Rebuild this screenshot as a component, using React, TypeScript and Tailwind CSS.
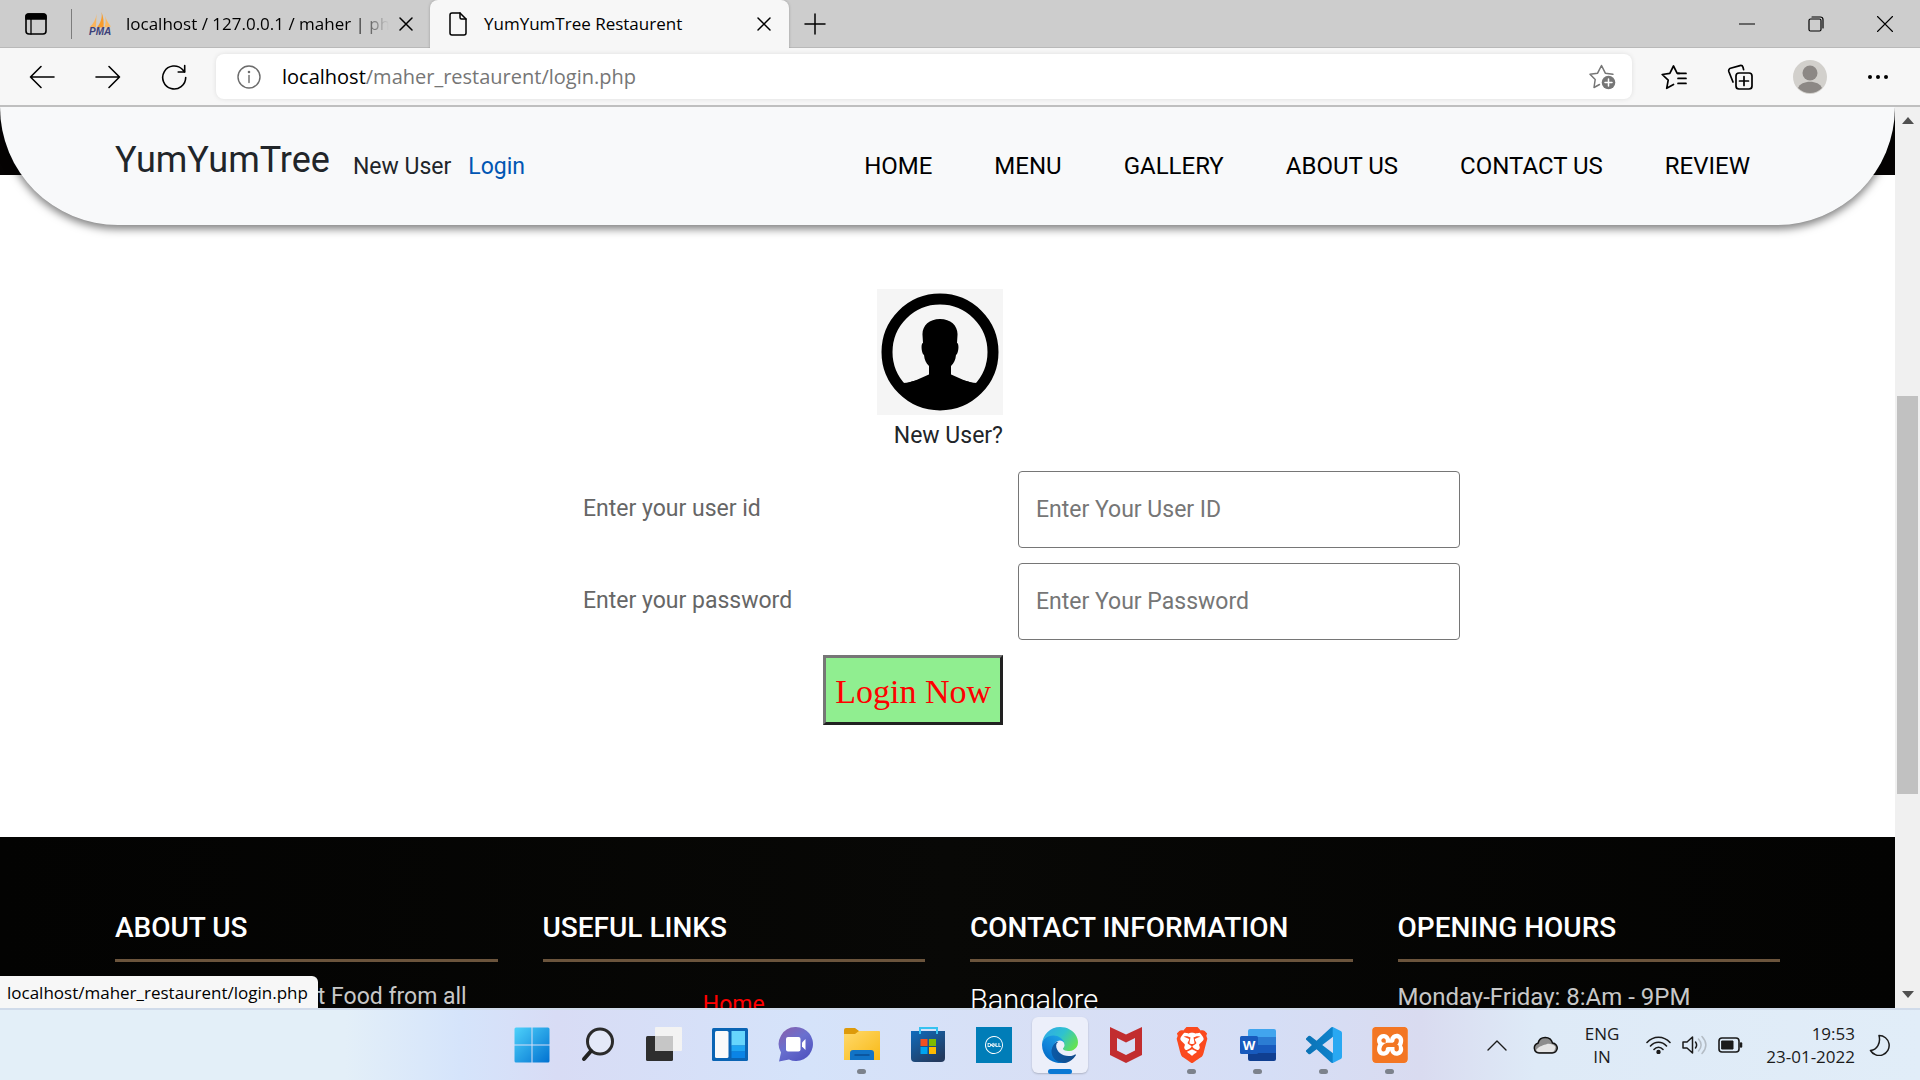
import React from "react";
import { SiBrave, SiDell, SiXampp } from "react-icons/si";

const stroke = {
  fill: "none",
  stroke: "currentColor",
  strokeLinecap: "round" as const,
  strokeLinejoin: "round" as const,
};

function CloseGlyph() {
  return (
    <svg viewBox="0 0 14 14" className="size-[14px]" {...stroke} strokeWidth="1.5">
      <path d="M1 1l12 12M13 1L1 13" />
    </svg>
  );
}

function PmaIcon() {
  return (
    <svg viewBox="0 0 24 24" className="h-6 w-[26px]">
      <path d="M8.500 2C8 7 5.500 12 1.500 15.500L8 15z" fill="#f9b45c" />
      <path d="M13.500 0C14.500 6 12.500 11 9 15.500h6.500C16 10 15.500 5 13.500 0z" fill="#f89c2c" />
      <path d="M17 4c1 4 .8 8-.5 11.500L23 14.500C20.500 12 18.500 8 17 4z" fill="#fbb860" />
      <text x="1" y="23" fontFamily="Liberation Sans" fontSize="10" fontWeight="700" fontStyle="italic" fill="#3c3f78">
        PMA
      </text>
    </svg>
  );
}

function TabBar() {
  return (
    <div className="flex h-12 shrink-0 items-center border-b border-[#b9b9b9] bg-[#cdcdcd] font-['Open_Sans',sans-serif] text-[17px] text-black">
      <button aria-label="Tab actions" className="ml-6">
        <svg viewBox="0 0 24 24" className="size-6" {...stroke} strokeWidth="1.600">
          <rect x="2" y="2" width="20" height="20" rx="3" />
          <path d="M2 4.500Q2 2 4.500 2h15Q22 2 22 4.500V7H2z" fill="currentColor" />
          <path d="M7 7v15" strokeWidth="1.300" />
        </svg>
      </button>
      <div className="ml-[23px] h-[30px] w-px bg-[#7c7c7c]" />
      <div className="flex w-[358px] items-center pl-[15px] pr-[17px]">
        <PmaIcon />
        <span className="ml-[13px] min-w-0 flex-1 overflow-hidden whitespace-nowrap [mask-image:linear-gradient(to_right,black_86%,transparent)]">
          localhost / 127.0.0.1 / maher | phpMyAdmin
        </span>
        <button aria-label="Close tab" className="ml-2.5">
          <CloseGlyph />
        </button>
      </div>
      <div className="flex h-12 w-[359px] items-center rounded-t-lg bg-[#f7f7f7] pl-[19px] pr-[18px] shadow-[0_0_3px_rgba(0,0,0,0.25)]">
        <svg viewBox="0 0 18 24" className="h-6 w-[18px]" {...stroke} strokeWidth="1.500">
          <path d="M3 1h8l6 6v14a2 2 0 0 1-2 2H3a2 2 0 0 1-2-2V3a2 2 0 0 1 2-2z" />
          <path d="M11 1v4.500A1.500 1.500 0 0 0 12.500 7H17" />
        </svg>
        <span className="ml-[17px] flex-1 whitespace-nowrap">YumYumTree Restaurent</span>
        <button aria-label="Close tab">
          <CloseGlyph />
        </button>
      </div>
      <button aria-label="New tab" className="ml-[15px]">
        <svg viewBox="0 0 22 22" className="size-[22px]" {...stroke} strokeWidth="1.500">
          <path d="M11 1v20M1 11h20" />
        </svg>
      </button>
      <div className="ml-auto mr-[27px] flex items-center gap-[53px]">
        <button aria-label="Minimize">
          <svg viewBox="0 0 16 16" className="size-4" {...stroke} strokeWidth="1.200">
            <path d="M.5 8h15" />
          </svg>
        </button>
        <button aria-label="Restore">
          <svg viewBox="0 0 16 16" className="size-4" {...stroke} strokeWidth="1.200">
            <rect x="1" y="3" width="12" height="12" rx="1.500" />
            <path d="M4 1h8.500A2.500 2.500 0 0 1 15 3.500V12" />
          </svg>
        </button>
        <button aria-label="Close window">
          <svg viewBox="0 0 16 16" className="size-4" {...stroke} strokeWidth="1.100">
            <path d="M.5.5l15 15M15.500.5l-15 15" />
          </svg>
        </button>
      </div>
    </div>
  );
}

function ToolBar() {
  return (
    <div className="flex h-[59px] shrink-0 items-center border-b-2 border-[#bfbfbf] bg-[#f7f7f7] pl-[29px] pr-[31px] font-['Open_Sans',sans-serif] text-xl text-black">
      <div className="flex items-center gap-10">
        <button aria-label="Back">
          <svg viewBox="0 0 26 26" className="size-[26px]" {...stroke} strokeWidth="1.600">
            <path d="M25 13H1.500M12 2.500L1.500 13 12 23.500" />
          </svg>
        </button>
        <button aria-label="Forward">
          <svg viewBox="0 0 26 26" className="size-[26px]" {...stroke} strokeWidth="1.600">
            <path d="M1 13h23.500M14 2.500L24.500 13 14 23.500" />
          </svg>
        </button>
        <button aria-label="Refresh">
          <svg viewBox="0 0 26 26" className="size-[26px]" {...stroke} strokeWidth="1.600">
            <path d="M24.700 13.500A11.500 11.500 0 1 1 21.500 5.500L23.500 8" />
            <path d="M23.700 1.500V8h-6.500" />
          </svg>
        </button>
      </div>
      <div className="ml-[29px] flex h-[45px] flex-1 items-center rounded-lg bg-white pl-[21px] pr-4 shadow-[0_0_5px_rgba(0,0,0,0.1)]">
        <svg viewBox="0 0 24 24" className="size-6 text-[#6b6b6b]" {...stroke} strokeWidth="1.400">
          <circle cx="12" cy="12" r="11" />
          <path d="M12 10.500v7" />
          <circle cx="12" cy="7" r=".6" fill="currentColor" />
        </svg>
        <span className="ml-[21px] flex-1 whitespace-nowrap text-[#767676]">
          <span className="text-black">localhost</span>/maher_restaurent/login.php
        </span>
        <button aria-label="Add to favorites" className="text-[#767676]">
          <svg viewBox="0 0 27 27" className="size-[27px]" {...stroke} strokeWidth="1.500">
            <path d="M10.500 21.500L5 24.500 6.200 16.500 1 11.300l7.600-1.100L12.500 2.500l3.800 7.700 7.600 1.100" />
            <circle cx="19.500" cy="19.500" r="6.800" fill="currentColor" stroke="none" />
            <path d="M19.500 16v7M16 19.500h7" stroke="#fff" />
          </svg>
        </button>
      </div>
      <div className="ml-[29px] flex items-center gap-10">
        <button aria-label="Favorites">
          <svg viewBox="0 0 26 26" className="size-[26px]" {...stroke} strokeWidth="1.700">
            <path d="M12.500 20.500l-6.800 3.800 1.500-8.200L1.200 10.500l7.600-1.100L12.500 2l3.700 7.400h2" />
            <path d="M17 9.400h8M17 14.400h8M17 19.400h8" />
          </svg>
        </button>
        <button aria-label="Collections">
          <svg viewBox="0 0 26 26" className="size-[26px]" {...stroke} strokeWidth="1.700">
            <path d="M6 18L1.800 7.500a2.500 2.500 0 0 1 1.700-3.200L13 1.600a2.500 2.500 0 0 1 3 1.700l.6 2.300" />
            <rect x="9" y="9" width="16" height="16" rx="3" />
            <path d="M17 12.500v9M12.500 17h9" />
          </svg>
        </button>
        <button aria-label="Profile">
          <svg viewBox="0 0 34 34" className="size-[34px]">
            <circle cx="17" cy="17" r="17" fill="#d2d0cc" />
            <circle cx="17" cy="13" r="7.500" fill="#8c8885" />
            <path d="M5 28c3-8.500 21-8.500 24 0a17 17 0 0 1-24 0z" fill="#8c8885" />
          </svg>
        </button>
        <button aria-label="Settings and more">
          <svg viewBox="0 0 22 6" className="h-1.5 w-[22px]">
            <circle cx="3" cy="3" r="2" />
            <circle cx="11" cy="3" r="2" />
            <circle cx="19" cy="3" r="2" />
          </svg>
        </button>
      </div>
    </div>
  );
}

const navLinks = ["HOME", "MENU", "GALLERY", "ABOUT US", "CONTACT US", "REVIEW"];

function SiteHeader() {
  return (
    <header className="absolute inset-x-0 top-0 flex h-[118px] items-center justify-between rounded-b-[118px] bg-[#f8f9fa] pl-[115px] pr-[145px] shadow-[0_4px_8px_rgba(0,0,0,0.5)]">
      <div className="flex items-center whitespace-nowrap text-[23px] text-[#212529]">
        <a href="#home" className="pb-3 text-4xl">
          YumYumTree
        </a>
        <a href="#register" className="ml-[23px] pt-0.5">
          New User
        </a>
        <a href="#login" className="ml-[17px] pt-0.5 text-[#0056b3]">
          Login
        </a>
      </div>
      <nav className="flex gap-[62px] whitespace-nowrap text-2xl text-black">
        {navLinks.map((label) => (
          <a key={label} href="#nav">
            {label}
          </a>
        ))}
      </nav>
    </header>
  );
}

function UserPortrait() {
  return (
    <svg viewBox="0 0 126 126" className="size-[126px] bg-[#f5f5f5]">
      <circle cx="63" cy="63" r="53" fill="none" stroke="#000" strokeWidth="11" />
      <path d="M63 30c11 0 18 7 17.500 16l-.5 8c2.500 0 1.500 11-1 12-.5 5-2 8-5 11v9c7 5 14 5 25 9a54 54 0 0 1-72 0c11-4 18-4 25-9v-9c-3-3-4.500-6-5-11-2.500-1-3.500-12-1-12l-.5-8C45 37 52 30 63 30z" />
      <path d="M26 94c9 0 18-5 27-9h20c9 4 18 9 27 9l4 6-18 16H40L22 100z" />
    </svg>
  );
}

const fields = [
  { id: "user", label: "Enter your user id", hint: "Enter Your User ID", type: "text" },
  { id: "pass", label: "Enter your password", hint: "Enter Your Password", type: "password" },
];

function LoginForm() {
  return (
    <form className="mx-auto grid w-full max-w-[1025px] grid-cols-[568fr_442fr] items-center gap-[15px] pb-[112px] pt-[114px] text-[23px]">
      <div className="flex flex-col items-end">
        <UserPortrait />
        <a href="#register" className="leading-[41px] text-[#212529]">
          New User?
        </a>
      </div>
      <div />
      {fields.map((f) => (
        <React.Fragment key={f.id}>
          <label htmlFor={f.id} className="pl-[148px] text-[#666]">
            {f.label}
          </label>
          <input
            id={f.id}
            type={f.type}
            placeholder={f.hint}
            className="h-[77px] w-full rounded-sm border border-[#767676] bg-white px-[17px] placeholder:text-[#767676]"
          />
        </React.Fragment>
      ))}
      <button
        type="button"
        className="h-[70px] justify-self-end border-[3px] border-b-[#212121] border-l-[#767676] border-r-[#212121] border-t-[#767676] bg-[#90ee90] px-[9px] pt-0.5 font-['Liberation_Serif',serif] text-[34px] text-[#ff0000]"
      >
        Login Now
      </button>
    </form>
  );
}

function FooterColumn({ title, children }: { title: string; children: React.ReactNode }) {
  return (
    <section className="min-w-0 whitespace-nowrap">
      <h2 className="border-b-[3px] border-[#6b543c] pb-[13px] text-[28px] font-medium leading-9 text-white">{title}</h2>
      {children}
    </section>
  );
}

function SiteFooter() {
  return (
    <footer className="grid grid-cols-4 gap-[45px] bg-linear-to-r from-[#030302] via-[#080806] to-[#030302] px-[115px] pt-[73px] text-2xl leading-[34px] text-[#c8c8c8]">
      <FooterColumn title="ABOUT US">
        <p className="mt-[18px] text-[23px]">We Provide The Best Food from all</p>
      </FooterColumn>
      <FooterColumn title="USEFUL LINKS">
        <a href="#home" className="mt-[26px] block text-center text-[23px] text-[#ff0000]">
          Home
        </a>
      </FooterColumn>
      <FooterColumn title="CONTACT INFORMATION">
        <p className="mt-[21px] text-[29px] font-light text-white">Bangalore</p>
      </FooterColumn>
      <FooterColumn title="OPENING HOURS">
        <p className="mt-[18px]">Monday-Friday: 8:Am - 9PM</p>
      </FooterColumn>
    </footer>
  );
}

function ScrollBar() {
  return (
    <div className="flex w-[25px] shrink-0 flex-col items-center bg-[#f0f0f0] py-2.5">
      <svg viewBox="0 0 12 7" className="h-[7px] w-3">
        <path d="M0 7l6-7 6 7z" fill="#505050" />
      </svg>
      <div className="flex w-full flex-1 flex-col items-center pt-[272px]">
        <div className="h-[398px] w-[21px] bg-[#c1c1c1]" />
      </div>
      <svg viewBox="0 0 12 7" className="h-[7px] w-3">
        <path d="M0 0l6 7 6-7z" fill="#505050" />
      </svg>
    </div>
  );
}

function WindowsIcon() {
  return (
    <svg viewBox="0 0 36 36" className="size-9">
      <defs>
        <linearGradient id="win" gradientUnits="userSpaceOnUse" x1="0" y1="0" x2="36" y2="36">
          <stop offset="0" stopColor="#4fd3fb" />
          <stop offset="1" stopColor="#0070d0" />
        </linearGradient>
      </defs>
      <path d="M2 .5h15.500v17H.5V2A1.500 1.500 0 0 1 2 .5zM18.500.5H34A1.500 1.500 0 0 1 35.500 2v15.500h-17zM.5 18.500h17v17H2A1.500 1.500 0 0 1 .5 34zM18.500 18.500h17V34a1.500 1.500 0 0 1-1.500 1.500H18.500z" fill="url(#win)" />
    </svg>
  );
}

function SearchIcon() {
  return (
    <svg viewBox="0 0 36 36" className="size-9">
      <circle cx="20" cy="14.500" r="12.500" fill="#e4e9f8" stroke="#2b2b2b" strokeWidth="3" />
      <path d="M11 24l-7 8" stroke="#222" strokeWidth="4" strokeLinecap="round" />
    </svg>
  );
}

function TaskViewIcon() {
  return (
    <svg viewBox="0 0 36 36" className="size-9">
      <rect x="0" y="9" width="27" height="25" rx="1.500" fill="#2e2e2e" />
      <rect x="9" y="0" width="27" height="24" rx="1" fill="#f3f3f3" />
      <rect x="9" y="9" width="18" height="15" fill="#c6c6c6" />
    </svg>
  );
}

function WidgetsIcon() {
  return (
    <svg viewBox="0 0 36 36" className="size-9">
      <rect x="0" y="1" width="36" height="33" rx="1.500" fill="#0a64b4" />
      <rect x="3" y="4" width="13.500" height="27" rx="1.500" fill="#fafafa" />
      <path d="M19.500 4H33v14.500H19.500z" fill="#66d6fc" />
      <path d="M19.500 18.500H33v6H19.500z" fill="#1ea5f2" />
      <path d="M19.500 24.500H33V31H19.500z" fill="#0a84e6" />
    </svg>
  );
}

function ChatIcon() {
  return (
    <svg viewBox="0 0 36 36" className="size-9">
      <defs>
        <linearGradient id="chat" x1="0" y1="0" x2=".7" y2="1">
          <stop offset="0" stopColor="#8c5ea8" />
          <stop offset=".5" stopColor="#6a70cf" />
          <stop offset="1" stopColor="#5154c0" />
        </linearGradient>
      </defs>
      <path d="M18 0a17 17 0 1 1-7 32.500L1 34.500l2-9A17 17 0 0 1 18 0z" fill="url(#chat)" />
      <rect x="8" y="10" width="14.500" height="14.500" rx="2" fill="#fff" />
      <path d="M24 15.500l3.500-3.500v11L24 19.500z" fill="#fff" />
    </svg>
  );
}

function FolderIcon() {
  return (
    <svg viewBox="0 0 36 36" className="size-9">
      <defs>
        <linearGradient id="folder" x1="0" y1="0" x2="1" y2="1">
          <stop offset="0" stopColor="#ffd96b" />
          <stop offset="1" stopColor="#f8b916" />
        </linearGradient>
      </defs>
      <path d="M0 3a2 2 0 0 1 2-2h9l4 3h19a2 2 0 0 1 2 2v6H0z" fill="#dd9a0a" />
      <path d="M0 7h11l4-3h20l1 1v28H0z" fill="url(#folder)" />
      <path d="M6 33v-7a3 3 0 0 1 3-3h18a3 3 0 0 1 3 3v7z" fill="#1173c6" />
      <path d="M11 28h14" stroke="#0a4d92" strokeWidth="1.500" strokeLinecap="round" />
    </svg>
  );
}

function StoreIcon() {
  return (
    <svg viewBox="0 0 36 36" className="size-9">
      <defs>
        <linearGradient id="store" x1="0" y1="0" x2=".7" y2="1">
          <stop offset="0" stopColor="#0f6cbd" />
          <stop offset="1" stopColor="#243a5e" />
        </linearGradient>
      </defs>
      <path d="M1 4h34v27a4 4 0 0 1-4 4H5a4 4 0 0 1-4-4z" fill="url(#store)" />
      <path d="M10 7V1h17v6" fill="none" stroke="#36c2f0" strokeWidth="2" />
      <path d="M10.500 12h7v7h-7z" fill="#f25022" />
      <path d="M19 12h7v7h-7z" fill="#7fba00" />
      <path d="M10.500 20h7v7h-7z" fill="#00a4ef" />
      <path d="M19 20h7v7h-7z" fill="#ffb900" />
    </svg>
  );
}

function DellIcon() {
  return (
    <span className="flex size-9 items-center justify-center bg-[#007db8]">
      <SiDell className="size-[18px] text-white" />
    </span>
  );
}

function EdgeIcon() {
  return (
    <svg viewBox="0 0 256 256" className="size-9">
      <defs>
        <linearGradient id="edgeA" x1=".1" y1=".5" x2="1" y2=".5">
          <stop offset="0" stopColor="#0c59a4" />
          <stop offset="1" stopColor="#114a8b" />
        </linearGradient>
        <linearGradient id="edgeB" x1=".8" y1=".2" x2=".3" y2="1">
          <stop offset="0" stopColor="#1b9de2" />
          <stop offset=".6" stopColor="#0f7fd8" />
          <stop offset="1" stopColor="#0067c0" />
        </linearGradient>
        <linearGradient id="edgeC" x1="0" y1=".2" x2="1" y2=".7">
          <stop offset="0" stopColor="#2fa8e8" />
          <stop offset=".5" stopColor="#2fc2cf" />
          <stop offset="1" stopColor="#66e34e" />
        </linearGradient>
      </defs>
      <path d="M235.700 195.500a93.700 93.700 0 0 1-10.600 4.700 101.900 101.900 0 0 1-35.900 6.400c-47.300 0-88.500-32.500-88.500-74.300a31.500 31.500 0 0 1 16.400-27.300c-42.800 1.800-53.800 46.400-53.800 72.500 0 74 68.100 81.400 82.800 81.400 7.900 0 19.800-2.300 27-4.600l1.300-.4a128.300 128.300 0 0 0 66.600-52.800 4 4 0 0 0-5.300-5.600z" fill="url(#edgeA)" />
      <path d="M105.700 241.400a79.200 79.200 0 0 1-22.700-21.300 80.700 80.700 0 0 1 29.500-120c3.200-1.500 8.500-4.100 15.600-4a32.400 32.400 0 0 1 25.700 13 31.900 31.900 0 0 1 6.300 18.700c0-.2 24.500-79.600-80-79.600-43.900 0-80 41.600-80 78.200a130.200 130.200 0 0 0 12.100 56 128 128 0 0 0 156.400 67 75.500 75.500 0 0 1-62.800-8z" fill="url(#edgeB)" />
      <path d="M152.300 148.900c-.9 1-3.400 2.500-3.400 5.600 0 2.600 1.700 5.100 4.700 7.200 14.400 10 41.500 8.700 41.600 8.700a59.600 59.600 0 0 0 30.300-8.300 61.400 61.400 0 0 0 30.400-52.900c.3-22.400-8-37.300-11.300-43.900C223.500 23.900 177.700 0 128 0A128 128 0 0 0 0 126.200c.5-36.500 36.800-66 80-66 3.500 0 23.500.3 42 10.100 16.300 8.600 24.900 19 30.800 29.200 6.200 10.700 7.300 24.100 7.300 29.500 0 5.300-2.700 13.300-7.800 19.900z" fill="url(#edgeC)" />
    </svg>
  );
}

function McAfeeIcon() {
  return (
    <svg viewBox="0 0 36 36" className="size-9">
      <path d="M2 0l16 7.500L34 0v28l-16 8-16-8zM9 11v12.500l9 4.500 9-4.500V11l-9 4.500z" fill="#c22d2f" fillRule="evenodd" />
    </svg>
  );
}

function BraveIcon() {
  return (
    <span className="relative flex size-9 items-center justify-center">
      <svg viewBox="0 0 36 36" className="absolute size-9">
        <path d="M7 6h22v14l-6 8-5 3-5-3-6-8z" fill="#fff" />
      </svg>
      <SiBrave className="relative size-9 text-[#fb4a1e]" />
    </span>
  );
}

function WordIcon() {
  return (
    <svg viewBox="0 0 36 36" className="size-9">
      <path d="M8 4a2 2 0 0 1 2-2h24a2 2 0 0 1 2 2v6H8z" fill="#41a5ee" />
      <path d="M8 10h28v8H8z" fill="#2b7cd3" />
      <path d="M8 18h28v8H8z" fill="#185abd" />
      <path d="M8 26h28v6a2 2 0 0 1-2 2H10a2 2 0 0 1-2-2z" fill="#103f91" />
      <rect x="0" y="9" width="18" height="18" rx="1.500" fill="#185abd" />
      <text x="9" y="23" textAnchor="middle" fontFamily="Open Sans" fontSize="13" fontWeight="700" fill="#fff">
        W
      </text>
    </svg>
  );
}

function CodeIcon() {
  return (
    <svg viewBox="0 0 24 24" className="size-9">
      <defs>
        <linearGradient id="code" gradientUnits="userSpaceOnUse" x1="0" y1="0" x2="24" y2="0">
          <stop offset="0" stopColor="#0b72b5" />
          <stop offset=".73" stopColor="#0d83cc" />
          <stop offset=".75" stopColor="#29a8f2" />
        </linearGradient>
      </defs>
      <path d="M23.150 2.587L18.210.21a1.494 1.494 0 0 0-1.705.29l-9.460 8.630-4.120-3.128a.999.999 0 0 0-1.276.057L.327 7.261A1 1 0 0 0 .326 8.740L3.899 12 .326 15.260a1 1 0 0 0 .001 1.479L1.650 17.940a.999.999 0 0 0 1.276.057l4.120-3.128 9.460 8.630a1.492 1.492 0 0 0 1.704.29l4.942-2.377A1.500 1.500 0 0 0 24 20.060V3.939a1.500 1.500 0 0 0-.85-1.352zm-5.146 14.861L10.826 12l7.178-5.448v10.896z" fill="url(#code)" />
    </svg>
  );
}

function XamppIcon() {
  return (
    <span className="flex size-9 items-center justify-center rounded bg-white">
      <SiXampp className="size-9 text-[#f37623]" />
    </span>
  );
}

type TaskApp = { name: string; icon: React.ReactNode; running?: boolean; active?: boolean };

const apps: TaskApp[] = [
  { name: "Start", icon: <WindowsIcon /> },
  { name: "Search", icon: <SearchIcon /> },
  { name: "Task view", icon: <TaskViewIcon /> },
  { name: "Widgets", icon: <WidgetsIcon /> },
  { name: "Chat", icon: <ChatIcon /> },
  { name: "File Explorer", icon: <FolderIcon />, running: true },
  { name: "Microsoft Store", icon: <StoreIcon /> },
  { name: "Dell", icon: <DellIcon /> },
  { name: "Microsoft Edge", icon: <EdgeIcon />, active: true },
  { name: "McAfee", icon: <McAfeeIcon /> },
  { name: "Brave", icon: <BraveIcon />, running: true },
  { name: "Word", icon: <WordIcon />, running: true },
  { name: "Visual Studio Code", icon: <CodeIcon />, running: true },
  { name: "XAMPP", icon: <XamppIcon />, running: true },
];

function Tray() {
  return (
    <div className="flex items-center justify-end pr-[30px] text-[17px] leading-[23px] text-[#1b1b1b]">
      <button aria-label="Show hidden icons">
        <svg viewBox="0 0 20 12" className="h-3 w-5" {...stroke} strokeWidth="1.400">
          <path d="M1 11l9-9 9 9" />
        </svg>
      </button>
      <svg viewBox="0 0 25 18" className="ml-[26px] h-[18px] w-[25px]">
        <path d="M6 17a5 5 0 0 1-1-9.800A7.500 7.500 0 0 1 19.500 7 5 5 0 0 1 19 17z" fill="#8d8d8d" stroke="#111" strokeWidth="1.500" />
        <path d="M3 14c3-4 8-5 11-6 2-.5 7 0 8.500 3-.5 3-1.500 5-4 5H6c-1 0-2-.8-3-2z" fill="#e4e4e4" />
      </svg>
      <div className="ml-[27px] text-center">
        ENG
        <br />
        IN
      </div>
      <div className="ml-[27px] flex items-center gap-[11px]">
        <svg viewBox="0 0 25 18" className="h-[18px] w-[25px]" {...stroke} strokeWidth="1.600">
          <path d="M1 6.500C7.500-.5 17.500-.5 24 6.500M4.500 10c4.500-5 11.500-5 16 0M8 13.500c2.500-3 6.500-3 9 0" />
          <circle cx="12.500" cy="16" r="1.400" fill="currentColor" />
        </svg>
        <svg viewBox="0 0 25 20" className="h-5 w-[25px]" {...stroke} strokeWidth="1.500">
          <path d="M1 7h4l5.500-5v16L5 13H1z" />
          <path d="M13.500 7c1.500 2 1.500 4 0 6" />
          <path d="M16.500 4c3.500 4 3.500 8 0 12M20 1.500c5 5.500 5 11.500 0 17" stroke="#b4bcc5" />
        </svg>
        <svg viewBox="0 0 25 16" className="h-4 w-[25px]" {...stroke} strokeWidth="1.600">
          <rect x="1" y="1" width="20" height="14" rx="3" />
          <rect x="4" y="4" width="11" height="8" fill="currentColor" strokeWidth="1" />
          <path d="M23 6.500v3" strokeWidth="2.500" />
        </svg>
      </div>
      <div className="ml-[23px] text-right whitespace-nowrap">
        19:53
        <br />
        23-01-2022
      </div>
      <svg viewBox="0 0 21 22" className="ml-3.5 h-[22px] w-[21px]" {...stroke} strokeWidth="1.500">
        <path d="M10 1.500a10 10 0 1 1-8.500 15C8 16 12 9 10 1.500z" />
      </svg>
    </div>
  );
}

function TaskBar() {
  return (
    <div className="grid h-[72px] shrink-0 grid-cols-[1fr_auto_1fr] border-t-2 border-[#d0dbea] bg-[linear-gradient(to_right,#e3eff8_0%,#e3eff8_18%,#d5e4fb_24%,#d8dcf5_29%,#d5e3fa_42%,#d8dff5_55%,#d5def6_66%,#d9dbf0_74%,#deeaf7_80%,#e1edf8_100%)] font-['Open_Sans',sans-serif]">
      <div />
      <div className="flex items-center gap-2.5 pl-px">
        {apps.map((app) => (
          <button
            key={app.name}
            aria-label={app.name}
            className={
              app.active
                ? "relative flex size-14 items-center justify-center rounded-md bg-[#eceffa] shadow-[0_1px_2px_rgba(0,0,0,0.2)]"
                : "relative flex size-14 items-center justify-center"
            }
          >
            {app.icon}
            {app.running && <span className="absolute -bottom-px h-[5px] w-[9px] rounded-full bg-[#7c828c]" />}
            {app.active && <span className="absolute -bottom-px h-[5px] w-6 rounded-full bg-[#0a78d4]" />}
          </button>
        ))}
      </div>
      <Tray />
    </div>
  );
}

export default function App() {
  return (
    <div className="flex h-screen flex-col overflow-hidden bg-white">
      <TabBar />
      <ToolBar />
      <div className="relative flex min-h-0 flex-1 overflow-hidden">
        <main className="relative min-w-0 flex-1 overflow-hidden bg-white font-['Roboto',sans-serif]">
          <div className="h-[68px] bg-[#050303]" />
          <LoginForm />
          <SiteFooter />
          <SiteHeader />
        </main>
        <ScrollBar />
        <div className="absolute bottom-0 left-0 rounded-tr-md bg-[#f7f7f7] pl-[7px] pr-2.5 pt-px font-['Open_Sans',sans-serif] text-[17px] leading-[31px] text-black">
          localhost/maher_restaurent/login.php
        </div>
      </div>
      <TaskBar />
    </div>
  );
}
